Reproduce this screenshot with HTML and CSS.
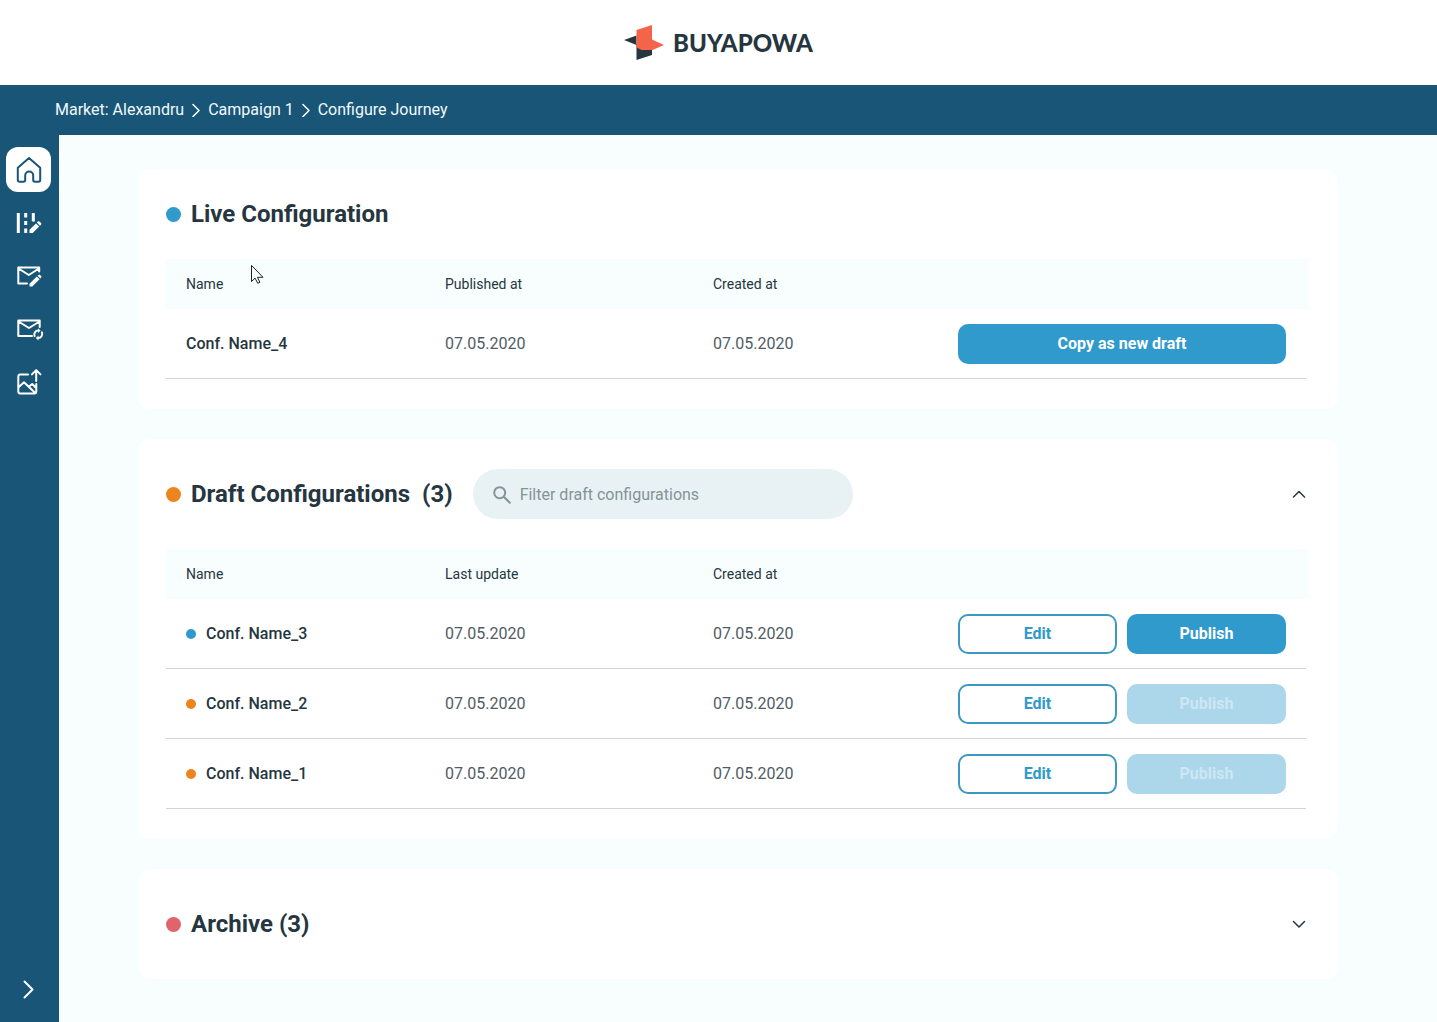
FILE: index.html
```html
<!DOCTYPE html>
<html lang="en">
<head>
<meta charset="utf-8">
<meta name="viewport" content="width=device-width, initial-scale=1">
<title>Configure Journey</title>
<link rel="stylesheet" href="styles.css">
</head>
<body>
<header class="brand">
  <a class="brand-link" href="#">
    <svg class="brand-mark" width="40" height="36" viewBox="0 0 40 36" aria-hidden="true">
      <path fill="#263640" d="M0 15 12.500 10.500v9.500zM12.500 19 28 25V30L12.500 35z"/>
      <path fill="#f4644a" d="M12.500 5 28 0V14.500l12 5.500-11.500 5h-11l-5-2.500z"/>
    </svg>
    <span class="brand-name">BUYAPOWA</span>
  </a>
</header>

<nav class="crumbs" aria-label="Breadcrumb">
  <a href="#">Market: Alexandru</a>
  <svg class="crumb-sep" width="8" height="14" viewBox="0 0 8 14" aria-hidden="true"><path d="M1 1.500l6 6-6 6"/></svg>
  <a href="#">Campaign 1</a>
  <svg class="crumb-sep" width="8" height="14" viewBox="0 0 8 14" aria-hidden="true"><path d="M1 1.500l6 6-6 6"/></svg>
  <a href="#">Configure Journey</a>
</nav>

<div class="shell">
  <aside class="sidebar">
    <button class="side-item active" type="button" aria-label="Home">
      <svg viewBox="0 0 45 45"><path d="M11.800 20.800 23 11l11.200 9.800V33a1.800 1.800 0 0 1-1.800 1.800h-3.400a1.800 1.800 0 0 1-1.800-1.800v-4.500a4 4 0 0 0-8 0V33a1.800 1.800 0 0 1-1.800 1.800h-3.800a1.800 1.800 0 0 1-1.800-1.800z"/></svg>
    </button>
    <button class="side-item" type="button" aria-label="Edit journey">
      <svg viewBox="0 0 45 45"><path class="thick" d="M12.300 13v20M19.700 13v4.500M19.700 21v4M19.700 28.500V33M27.300 13v8.500"/><path class="solid" d="M23.500 33v-3.200l6.500-6.400 3.200 3.200-6.500 6.400zM30.800 22.600l1-1a1.200 1.200 0 0 1 1.700 0l1.500 1.500a1.200 1.200 0 0 1 0 1.700l-1 1z"/></svg>
    </button>
    <button class="side-item" type="button" aria-label="Edit emails">
      <svg viewBox="0 0 45 45"><path d="M21 30.500h-8.700V14.600h20.900V18.500M12.500 15.500 22.800 22l10.200-6.500"/><path class="solid" d="M23.500 33.500v-2.800l7.300-7.200 2.800 2.800-7.300 7.200zM31.600 22.700l.8-.8a1.200 1.200 0 0 1 1.700 0l1 1a1.200 1.200 0 0 1 0 1.700l-.8.8z"/></svg>
    </button>
    <button class="side-item" type="button" aria-label="Email sync">
      <svg viewBox="0 0 45 45"><path d="M26 30.100H12.300V14.600h21.400V21M12.500 15.500 23 22l10.500-6.500"/><path class="thin" d="M28.600 30.200a4 4 0 0 1 3.700-5.600M35.900 26.400a4 4 0 0 1-3.700 5.600"/><path class="solid" d="M32 22.200v4.800l2.600-2.400zM32.500 29.600v4.800L29.900 32z"/></svg>
    </button>
    <button class="side-item" type="button" aria-label="Upload images">
      <svg viewBox="0 0 45 45"><path d="M22 15.500h-7.700a2 2 0 0 0-2 2V32.500a2 2 0 0 0 2 2h14a2 2 0 0 0 2-2V25M12.300 28.500l5.700-5.300 11 10.600M23 27.500l3.200-2.500 4 4M30.200 22V11.500M25.900 15.400l4.300-4.300 4.300 4.300"/></svg>
    </button>
    <button class="side-item side-toggle" type="button" aria-label="Expand menu">
      <svg viewBox="0 0 45 45"><path d="M18.500 14.500l8 8-8 8"/></svg>
    </button>
  </aside>

  <main class="content">
    <section class="card">
      <div class="card-head compact">
        <span class="dot blue"></span>
        <h2>Live Configuration</h2>
      </div>
      <table>
        <colgroup><col class="c-name"><col class="c-date"><col class="c-created"><col></colgroup>
        <thead><tr><th>Name</th><th>Published at</th><th>Created at</th><th aria-label="Actions"></th></tr></thead>
        <tbody>
          <tr><td class="name">Conf. Name_4</td><td>07.05.2020</td><td>07.05.2020</td>
            <td><div class="actions"><button class="btn primary" type="button">Copy as new draft</button></div></td></tr>
        </tbody>
      </table>
    </section>

    <section class="card">
      <div class="card-head">
        <span class="dot orange"></span>
        <h2>Draft Configurations <span class="count">(3)</span></h2>
        <label class="filter">
          <svg width="18" height="18" viewBox="0 0 18 18" aria-hidden="true"><circle cx="6.700" cy="6.700" r="5.500"/><path d="M10.800 10.800l6 6"/></svg>
          <input type="search" placeholder="Filter draft configurations" aria-label="Filter draft configurations">
        </label>
        <button class="fold" type="button" aria-label="Collapse drafts"><svg width="14" height="8" viewBox="0 0 14 8"><path d="M1.500 7l5.500-5.500 5.500 5.500"/></svg></button>
      </div>
      <table>
        <colgroup><col class="c-name"><col class="c-date"><col class="c-created"><col></colgroup>
        <thead><tr><th>Name</th><th>Last update</th><th>Created at</th><th aria-label="Actions"></th></tr></thead>
        <tbody>
          <tr><td class="name"><span class="dot small blue"></span>Conf. Name_3</td><td>07.05.2020</td><td>07.05.2020</td>
            <td><div class="actions"><button class="btn outline" type="button">Edit</button><button class="btn primary" type="button">Publish</button></div></td></tr>
          <tr><td class="name"><span class="dot small orange"></span>Conf. Name_2</td><td>07.05.2020</td><td>07.05.2020</td>
            <td><div class="actions"><button class="btn outline" type="button">Edit</button><button class="btn primary" type="button" disabled>Publish</button></div></td></tr>
          <tr><td class="name"><span class="dot small orange"></span>Conf. Name_1</td><td>07.05.2020</td><td>07.05.2020</td>
            <td><div class="actions"><button class="btn outline" type="button">Edit</button><button class="btn primary" type="button" disabled>Publish</button></div></td></tr>
        </tbody>
      </table>
    </section>

    <section class="card flat">
      <div class="card-head">
        <span class="dot red"></span>
        <h2>Archive (3)</h2>
        <button class="fold" type="button" aria-label="Expand archive"><svg width="14" height="8" viewBox="0 0 14 8"><path d="M1.500 1.500l5.500 5.500 5.500-5.500"/></svg></button>
      </div>
    </section>
  </main>
</div>

<svg class="pointer" width="13" height="20" viewBox="0 0 13 20" aria-hidden="true"><path d="M.5 .8v15.700l3.600-3.400 2.600 5.200 2.200-1-2.500-5h5.200z"/></svg>
</body>
</html>
```
FILE: styles.css
```css
* {
  box-sizing: border-box;
}

body {
  margin: 0;
  min-height: 100vh;
  display: flex;
  flex-direction: column;
  background: #f8fefe;
  color: #263640;
  font-family: Roboto, "Liberation Sans", sans-serif;
  font-size: 16px;
  line-height: 20px;
}

button {
  font: inherit;
  padding: 0;
  border: 0;
  background: none;
  cursor: pointer;
}

svg {
  display: block;
  fill: none;
  stroke-linecap: round;
  stroke-linejoin: round;
}

/* Brand bar */
.brand {
  height: 85px;
  display: flex;
  align-items: center;
  justify-content: center;
  background: #fff;
}

.brand-link {
  display: flex;
  align-items: center;
  gap: 9px;
  color: #263640;
  text-decoration: none;
}

.brand-name {
  font-family: Lato, Roboto, sans-serif;
  font-size: 24px;
  font-weight: 900;
  line-height: 36px;
}

/* Breadcrumb */
.crumbs {
  height: 50px;
  padding-left: 55px;
  display: flex;
  align-items: center;
  gap: 8px;
  background: #195576;
}

.crumbs a {
  color: #f0fafc;
  text-decoration: none;
}

.crumb-sep {
  stroke: #fff;
  stroke-width: 1.5;
}

.shell {
  flex: 1;
  display: flex;
}

/* Sidebar */
.sidebar {
  flex: 0 0 59px;
  padding: 12px 0 10px 6px;
  display: flex;
  flex-direction: column;
  gap: 8px;
  background: #195576;
}

.side-item {
  width: 45px;
  height: 45px;
  border-radius: 12px;
  stroke: #fff;
  stroke-width: 2;
}

.side-item.active {
  background: #fff;
  stroke: #195576;
}

.side-item .thick {
  stroke-width: 3;
  stroke-linecap: butt;
}

.side-item .solid {
  fill: #fff;
  stroke: none;
}

.side-toggle {
  margin-top: auto;
}

/* Cards */
.content {
  flex: 1;
  padding: 34px 99px 43px 79px;
  display: flex;
  flex-direction: column;
  gap: 30px;
}

.card {
  padding: 0 32px 30px 28px;
  border-radius: 12px;
  background: #fff;
}

.card.flat {
  padding-bottom: 0;
}

.card-head {
  height: 110px;
  display: flex;
  align-items: center;
}

.card-head.compact {
  height: 90px;
}

h2 {
  margin: 0 20px 0 10px;
  font-size: 24px;
  font-weight: 700;
  line-height: 28px;
}

.count {
  margin-left: 6px;
}

.dot {
  flex: none;
  width: 15px;
  height: 15px;
  border-radius: 50%;
}

.dot.small {
  display: inline-block;
  width: 10px;
  height: 10px;
  margin-right: 10px;
}

.blue {
  background: #309acd;
}

.orange {
  background: #ee8420;
}

.red {
  background: #e0646a;
}

.filter {
  width: 380px;
  height: 50px;
  padding: 2px 20px 0;
  display: flex;
  align-items: center;
  gap: 9px;
  border-radius: 25px;
  background: #e8f1f4;
}

.filter svg {
  flex: none;
  stroke: #849496;
  stroke-width: 2;
}

.filter input {
  flex: 1;
  min-width: 0;
  padding: 0;
  border: 0;
  outline: 0;
  background: none;
  color: #263640;
  font: inherit;
}

.filter input::placeholder {
  color: #849496;
  opacity: 1;
}

.fold {
  width: 14px;
  height: 24px;
  margin-left: auto;
  display: flex;
  align-items: center;
  stroke: #263640;
  stroke-width: 1.5;
}

/* Tables */
table {
  width: 100%;
  table-layout: fixed;
  border-collapse: separate;
  border-spacing: 0;
}

.c-name {
  width: 259px;
}

.c-date {
  width: 268px;
}

.c-created {
  width: 245px;
}

th,
td {
  padding: 0 20px;
  text-align: left;
  vertical-align: middle;
}

th {
  height: 50px;
  background: #f8fefe;
  font-size: 14px;
  font-weight: 400;
}

th:last-child {
  box-shadow: 3px 0 0 #f8fefe;
}

td {
  height: 70px;
  border-bottom: 1px solid #d0d4d6;
  color: #505c64;
}

td.name {
  color: #263640;
  font-weight: 500;
}

.actions {
  display: grid;
  grid-auto-flow: column;
  grid-auto-columns: 1fr;
  gap: 10px;
}

.btn {
  height: 40px;
  border-radius: 10px;
  font-weight: 700;
}

.primary {
  background: #309acd;
  color: #fff;
}

.primary:disabled {
  background: #acd6ea;
  color: #cde7f4;
  cursor: default;
}

.outline {
  border: 2px solid #3c98c2;
  background: #fff;
  color: #309acd;
}

/* Mouse pointer floating over the page */
.pointer {
  position: absolute;
  left: 251px;
  top: 265px;
  fill: #fff;
  stroke: #222;
  pointer-events: none;
}
```
